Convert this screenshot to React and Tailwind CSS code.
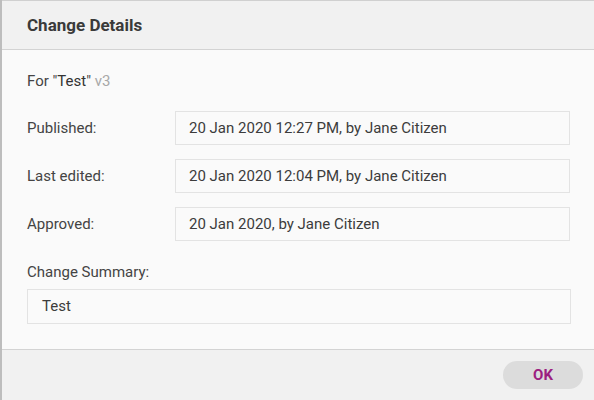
import React from "react";

function Row({ label, value }) {
  return (
    <div className="flex items-center">
      <div className="w-[148px] text-[15px] text-[#444]">{label}</div>
      <div className="flex h-[34px] w-[395px] items-center border border-[#e3e3e3] bg-[#fafafa] px-[13px] text-[15px] text-[#3c3c3c]">
        {value}
      </div>
    </div>
  );
}

export default function App() {
  return (
    <div
      className="flex h-[400px] w-[594px] bg-[#c9c9c9]"
      style={{ fontFamily: "Roboto, 'Liberation Sans', sans-serif" }}
    >
      <div className="w-[2px] bg-[#bdbdbd]" />
      <div className="flex flex-1 flex-col border-t border-[#d0d0d0]">
        <div className="flex h-[49px] items-center border-b border-[#d3d3d3] bg-[#f1f1f1] pl-[25px] pt-[2px]">
          <span className="text-[17px] font-bold text-[#3a3a3a]">Change Details</span>
        </div>
        <div className="flex flex-1 flex-col bg-[#fafafa] pl-[25px] pt-[21px]">
          <div className="text-[15px] leading-[20px] text-[#444]">
            For "<span className="text-[#333]">Test</span>" <span className="text-[#a8a8a8]">v3</span>
          </div>
          <div className="mt-[20px] flex flex-col gap-[14px]">
            <Row label="Published:" value="20 Jan 2020 12:27 PM, by Jane Citizen" />
            <Row label="Last edited:" value="20 Jan 2020 12:04 PM, by Jane Citizen" />
            <Row label="Approved:" value="20 Jan 2020, by Jane Citizen" />
          </div>
          <div className="mt-[21px] text-[15px] leading-[20px] text-[#444]">Change Summary:</div>
          <div className="mt-[7px] flex h-[35px] w-[544px] items-center border border-[#e3e3e3] bg-[#fafafa] px-[14px] text-[15px] text-[#3c3c3c]">
            Test
          </div>
        </div>
        <div className="flex h-[51px] items-center justify-end border-t border-[#d3d3d3] bg-[#f1f1f1] pr-[11px]">
          <button className="flex h-[28px] w-[80px] items-center justify-center rounded-full bg-[#dcdcdc] text-[15px] font-bold text-[#9c1f80]">
            OK
          </button>
        </div>
      </div>
    </div>
  );
}
